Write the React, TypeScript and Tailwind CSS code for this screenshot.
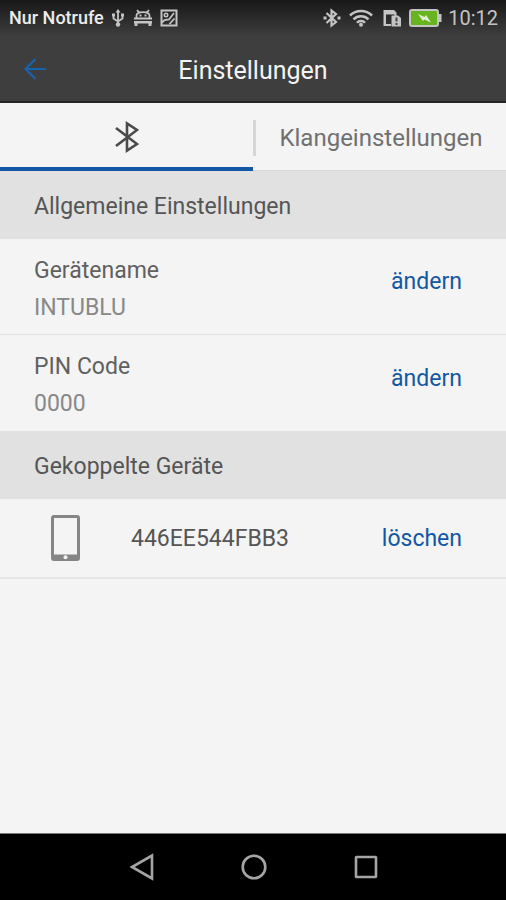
function BluetoothGlyph({ className }: { className?: string }) {
  return (
    <svg viewBox="0 0 24 32" className={className} fill="none" stroke="currentColor" strokeWidth="2.6" aria-hidden="true">
      <path d="M1 7 22 23 12 29.5V2.5L22 9 1 25" />
    </svg>
  );
}

function StatusBar() {
  return (
    <div className="flex h-9 items-center justify-between bg-gradient-to-b from-[#181818] to-[#3e3e3e] pr-2 pl-[9px] text-[#c4c4c4]">
      <div className="flex items-center">
        <span className="text-lg font-medium text-[#ececec]">Nur Notrufe</span>
        <svg viewBox="0 0 12 18" className="ml-2 h-[18px] w-3" fill="none" stroke="currentColor" strokeWidth="1.8" aria-hidden="true">
          <path d="M6 16V2M1.5 6v3.5L6 12.5l4.5-3V6" />
          <path d="M6 0 3.5 3.5h5zM0 4.5h3v3H0zM9 4.5h3v3H9z" fill="currentColor" stroke="none" />
          <circle cx="6" cy="15.5" r="2.2" fill="currentColor" stroke="none" />
        </svg>
        <svg viewBox="0 0 18 18" className="ml-2.5 h-[18px] w-[18px]" fill="none" stroke="currentColor" strokeWidth="1.8" aria-hidden="true">
          <path d="M2.5 9V6.5C3 2 15 2 15.5 6.5V9M3 1l2.5 3M15 1l-2.5 3" />
          <path d="M0 8.5h18v2H0zM0 12h18v2.5H0zM.5 14h3v3h-3zM14.5 14h3v3h-3z" fill="currentColor" stroke="none" />
          <path d="M5.5 6.5h2M10.5 6.5h2" />
        </svg>
        <svg viewBox="0 0 18 18" className="ml-2 h-[18px] w-[18px]" fill="none" stroke="currentColor" strokeWidth="2" aria-hidden="true">
          <path d="M1.5 1.5h15v15h-15z" />
          <circle cx="6" cy="6" r="1.7" strokeWidth="1.6" />
          <path d="M2 13.5 4.5 11 9 10.5 14 4M9.5 15l5-5.5" strokeWidth="1.8" />
        </svg>
      </div>
      <div className="flex items-center">
        <svg viewBox="0 0 18 20" className="h-5 w-[18px]" fill="none" stroke="currentColor" strokeWidth="2.2" aria-hidden="true">
          <path d="M3.5 5 13 14l-4.5 3.5v-15L13 6l-9.500 9" />
          <path d="M.5 8.5h3v3h-3zM14.5 8.5h3v3h-3z" fill="currentColor" stroke="none" />
        </svg>
        <svg viewBox="0 0 24 18" className="ml-2 h-[18px] w-6" fill="none" stroke="currentColor" strokeWidth="2.5" aria-hidden="true">
          <path d="M1 6.5C7 .5 17 .5 23 6.5M4.5 10.3c4-4 11-4 15 0M8 13.8c2-2.500 6-2.500 8 0" />
          <circle cx="12" cy="15.8" r="2" fill="currentColor" stroke="none" />
        </svg>
        <svg viewBox="0 0 18 18" className="ml-2.5 h-[18px] w-[18px]" aria-hidden="true">
          <path d="M.5 1H11l2.5 2.5V7h-2V5.500H3V15h5v2H.5z" fill="currentColor" />
          <path d="M8.500 6.500H15l3 2.500v8.500H8.500z" fill="currentColor" />
          <path d="M12.500 8.500h2v4h-2zM12.500 14h2v2h-2z" fill="#444" />
        </svg>
        <svg viewBox="0 0 33 18" className="ml-2 h-[18px] w-[33px]" aria-hidden="true">
          <rect x="1" y="1" width="28" height="16" rx="2" fill="#67b41f" stroke="currentColor" strokeWidth="2" />
          <path d="M30 5h2.500v8H30z" fill="currentColor" />
          <path d="m9 5 6.500 3L17 6l5 7.500-6.500-3L14 12z" fill="#e2eed4" />
        </svg>
        <span className="ml-1.5 text-xl">10:12</span>
      </div>
    </div>
  );
}

function SectionTitle({ children }: { children: string }) {
  return (
    <h2 className="flex h-[68px] items-center bg-[#e1e1e1] px-[34px] pt-1 text-[23px] text-[#555]">
      {children}
    </h2>
  );
}

export default function App() {
  const settings = [
    { label: "Gerätename", value: "INTUBLU" },
    { label: "PIN Code", value: "0000" },
  ];
  const devices = ["446EE544FBB3"];

  return (
    <div className="flex min-h-screen flex-col bg-[#f4f4f4] font-['Roboto',sans-serif]">
      <StatusBar />

      <header className="grid h-[67px] grid-cols-[70px_1fr_70px] items-center border-b-2 border-[#252525] bg-[#3e3e3e]">
        <button type="button" aria-label="Zurück" className="flex h-full items-center pl-6 text-[#1763ad]">
          <svg viewBox="0 0 22 22" className="h-[22px] w-[22px]" fill="none" stroke="currentColor" strokeWidth="2.2" aria-hidden="true">
            <path d="M22 11H2M11.5 1 1.5 11l10 10" />
          </svg>
        </button>
        <h1 className="pt-1 text-center text-[25px] text-[#f4f4f4]">Einstellungen</h1>
      </header>

      <nav className="flex h-[68px]">
        <button
          type="button"
          aria-label="Bluetooth"
          className="flex flex-1 items-center justify-center border-b-4 border-[#1257a5] pt-1 text-[#4a4a4a]"
        >
          <BluetoothGlyph className="h-8 w-6" />
        </button>
        <div className="flex flex-1 items-center border-b border-[#d3d8d8] pt-0.5">
          <span className="h-9 w-[3px] bg-[#d6d6d6]" />
          <button type="button" className="flex-1 text-center text-2xl text-[#707070]">
            Klangeinstellungen
          </button>
        </div>
      </nav>

      <main className="flex-1">
        <SectionTitle>Allgemeine Einstellungen</SectionTitle>
        <dl className="divide-y divide-[#e2e2e2]">
          {settings.map((item) => (
            <div key={item.label} className="flex h-24 items-center justify-between pt-1 pr-11 pl-[34px]">
              <div className="text-[23px] leading-[37px]">
                <dt className="text-[#606060]">{item.label}</dt>
                <dd className="text-[#888]">{item.value}</dd>
              </div>
              <button type="button" className="pb-3 text-[23px] text-[#1257a5]">
                ändern
              </button>
            </div>
          ))}
        </dl>

        <SectionTitle>Gekoppelte Geräte</SectionTitle>
        <ul>
          {devices.map((device) => (
            <li key={device} className="flex h-20 items-center border-b-2 border-[#e6e6e6] pr-11 pl-[51px]">
              <svg viewBox="0 0 29 46" className="h-[46px] w-[29px]" aria-hidden="true">
                <rect x="1.5" y="1.5" width="26" height="43" rx="1.5" fill="none" stroke="#858585" strokeWidth="3" />
                <path d="M2 39.5h25V45H2z" fill="#858585" />
                <circle cx="14.5" cy="42.2" r="2" fill="#f4f4f4" />
              </svg>
              <span className="ml-[51px] flex-1 pt-0.5 text-[23px] text-[#555]">{device}</span>
              <button type="button" className="pt-0.5 text-[23px] text-[#1257a5]">
                löschen
              </button>
            </li>
          ))}
        </ul>
      </main>

      <footer className="flex h-[67px] items-center justify-center gap-[86px] border-t border-[#777] bg-black pl-0.5 text-[#a5a5a5]">
        <button type="button" aria-label="Zurück">
          <svg viewBox="0 0 26 28" className="h-7 w-[26px]" fill="none" stroke="currentColor" strokeWidth="2.6" aria-hidden="true">
            <path d="M23 2.5v23L3 14z" />
          </svg>
        </button>
        <button type="button" aria-label="Startbildschirm">
          <svg viewBox="0 0 26 26" className="h-[26px] w-[26px]" fill="none" stroke="currentColor" strokeWidth="2.6" aria-hidden="true">
            <circle cx="13" cy="13" r="11.3" />
          </svg>
        </button>
        <button type="button" aria-label="Übersicht">
          <svg viewBox="0 0 26 26" className="h-[26px] w-[26px]" fill="none" stroke="currentColor" strokeWidth="2.6" aria-hidden="true">
            <rect x="3" y="3" width="20" height="20" rx="0.5" />
          </svg>
        </button>
      </footer>
    </div>
  );
}
